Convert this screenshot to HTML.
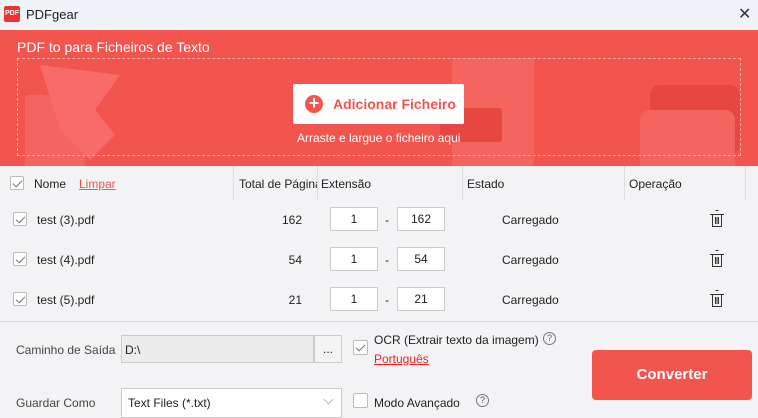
<!DOCTYPE html>
<html><head><meta charset="utf-8"><style>
*{box-sizing:border-box;margin:0;padding:0}
body{width:758px;height:415px;overflow:hidden;background:#f3f3f5;font-family:"Liberation Sans",sans-serif;font-size:12px;color:#222;position:relative}
.a{position:absolute}
.cb{position:absolute;width:14px;height:14px;border:1px solid #bbb;background:#fff;border-radius:2px}
.cb.k::after{content:"";position:absolute;left:4px;top:1px;width:4px;height:8px;border:solid #777;border-width:0 1px 1px 0;transform:rotate(45deg)}
.in{position:absolute;width:48px;height:24px;background:#fff;border:1px solid #ccc;text-align:center;line-height:22px}
.hd{position:absolute;top:166px;height:34px;border-left:1px solid #ddd}
</style></head><body>
<div class="a" style="left:0;top:0;width:758px;height:30px;background:#eff2f7"></div>
<div class="a" style="left:4px;top:6px;width:16px;height:16px;background:#e33;border-radius:2px;color:#fff;font-size:7px;line-height:16px;text-align:center;font-weight:bold">PDF</div>
<div class="a" style="left:26px;top:7px;font-size:13px">PDFgear</div>
<div class="a" style="left:738px;top:4px;font-size:16px;color:#333">✕</div>
<div class="a" style="left:0;top:30px;width:758px;height:136px;background:#f2554e;overflow:hidden">
 <svg class="a" style="left:0;top:0" width="758" height="136">
  <g opacity=".45">
   <rect x="25" y="65" width="60" height="76" rx="4" fill="#f57a73"/>
   <polygon points="40,35 120,45 95,80 115,105 90,130 60,100" fill="#f88"/>
   <rect x="452" y="28" width="82" height="108" rx="3" fill="#f57a73"/>
   <rect x="440" y="78" width="62" height="34" rx="3" fill="#d93a33"/>
   <rect x="650" y="55" width="90" height="70" rx="10" fill="#d93a33"/>
   <rect x="640" y="80" width="95" height="65" rx="10" fill="#f57a73"/>
  </g>
 </svg>
 <div class="a" style="left:17px;top:9px;color:#fff;font-size:14px">PDF to para Ficheiros de Texto</div>
 <div class="a" style="left:17px;top:28px;width:724px;height:98px;border:1px dashed #f8a9a5"></div>
 <div class="a" style="left:293px;top:54px;width:171px;height:40px;background:#fff;border-radius:2px"></div>
 <div class="a" style="left:305px;top:65px;width:18px;height:18px;border-radius:50%;background:#f2554e;color:#fff;font-size:18px;line-height:17px;text-align:center;font-weight:bold">+</div>
 <div class="a" style="left:333px;top:66px;color:#f2554e;font-weight:bold;font-size:14px">Adicionar Ficheiro</div>
 <div class="a" style="left:297px;top:101px;color:#fff;font-size:12px">Arraste e largue o ficheiro aqui</div>
</div>
<div class="hd" style="left:233px"></div><div class="hd" style="left:317px"></div><div class="hd" style="left:462px"></div><div class="hd" style="left:624px"></div><div class="hd" style="left:745px"></div>
<div class="cb k" style="left:10px;top:176px"></div>
<div class="a" style="left:34px;top:177px">Nome</div>
<div class="a" style="left:79px;top:177px;color:#f2554e;text-decoration:underline">Limpar</div>
<div class="a" style="left:239px;top:177px;width:78px;overflow:hidden;white-space:nowrap">Total de Página</div>
<div class="a" style="left:321px;top:177px">Extensão</div>
<div class="a" style="left:467px;top:177px">Estado</div>
<div class="a" style="left:629px;top:177px">Operação</div>

<div class="cb k" style="left:13px;top:212px"></div><div class="a" style="left:37px;top:213px">test (3).pdf</div><div class="a" style="left:260px;top:213px;width:42px;text-align:right">162</div><div class="in" style="left:330px;top:207px">1</div><div class="a" style="left:385px;top:213px">-</div><div class="in" style="left:397px;top:207px">162</div><div class="a" style="left:502px;top:213px">Carregado</div>
<div class="cb k" style="left:13px;top:252px"></div><div class="a" style="left:37px;top:253px">test (4).pdf</div><div class="a" style="left:260px;top:253px;width:42px;text-align:right">54</div><div class="in" style="left:330px;top:247px">1</div><div class="a" style="left:385px;top:253px">-</div><div class="in" style="left:397px;top:247px">54</div><div class="a" style="left:502px;top:253px">Carregado</div>
<div class="cb k" style="left:13px;top:292px"></div><div class="a" style="left:37px;top:293px">test (5).pdf</div><div class="a" style="left:260px;top:293px;width:42px;text-align:right">21</div><div class="in" style="left:330px;top:287px">1</div><div class="a" style="left:385px;top:293px">-</div><div class="in" style="left:397px;top:287px">21</div><div class="a" style="left:502px;top:293px">Carregado</div>
<svg class="a" style="left:708px;top:209px" width="18" height="100" fill="none" stroke="#333" stroke-width="1">
 <g id="t"><path d="M7.5 1.5h3M2 5.5h14M4.5 5.5v12h9v-12M7.5 8v7M9 8v7M10.5 8v7"/></g>
 <use href="#t" y="40"/><use href="#t" y="80"/>
</svg>
<div class="a" style="left:0;top:321px;width:758px;height:1px;background:#d8d8d8"></div>
<div class="a" style="left:16px;top:343px;color:#444">Caminho de Saída</div>
<div class="a" style="left:121px;top:335px;width:193px;height:28px;background:#ececec;border:1px solid #ccc;padding:7px 3px">D:\</div>
<div class="a" style="left:314px;top:335px;width:28px;height:28px;background:#f3f3f3;border:1px solid #ccc;text-align:center;line-height:26px">...</div>
<div class="cb k" style="left:353px;top:340px;width:15px;height:15px"></div>
<div class="a" style="left:374px;top:333px">OCR (Extrair texto da imagem)</div>
<div class="a" style="left:543px;top:332px;width:13px;height:13px;border:1px solid #777;border-radius:50%;font-size:9px;text-align:center;line-height:11px;color:#555">?</div>
<div class="a" style="left:374px;top:352px;color:#e22;text-decoration:underline">Português</div>
<div class="a" style="left:592px;top:350px;width:160px;height:50px;background:#f2554e;border-radius:4px;color:#fff;font-weight:bold;font-size:15px;text-align:center;line-height:50px">Converter</div>
<div class="a" style="left:16px;top:396px;color:#444">Guardar Como</div>
<div class="a" style="left:121px;top:388px;width:221px;height:30px;background:#fff;border:1px solid #ccc;padding:7px 6px">Text Files (*.txt)</div>
<div class="a" style="left:325px;top:396px;width:7px;height:7px;border:solid #bbb;border-width:0 1px 1px 0;transform:rotate(45deg)"></div>
<div class="cb" style="left:353px;top:393px;width:15px;height:15px"></div>
<div class="a" style="left:374px;top:396px">Modo Avançado</div>
<div class="a" style="left:476px;top:394px;width:13px;height:13px;border:1px solid #777;border-radius:50%;font-size:9px;text-align:center;line-height:11px;color:#555">?</div>
</body></html>
